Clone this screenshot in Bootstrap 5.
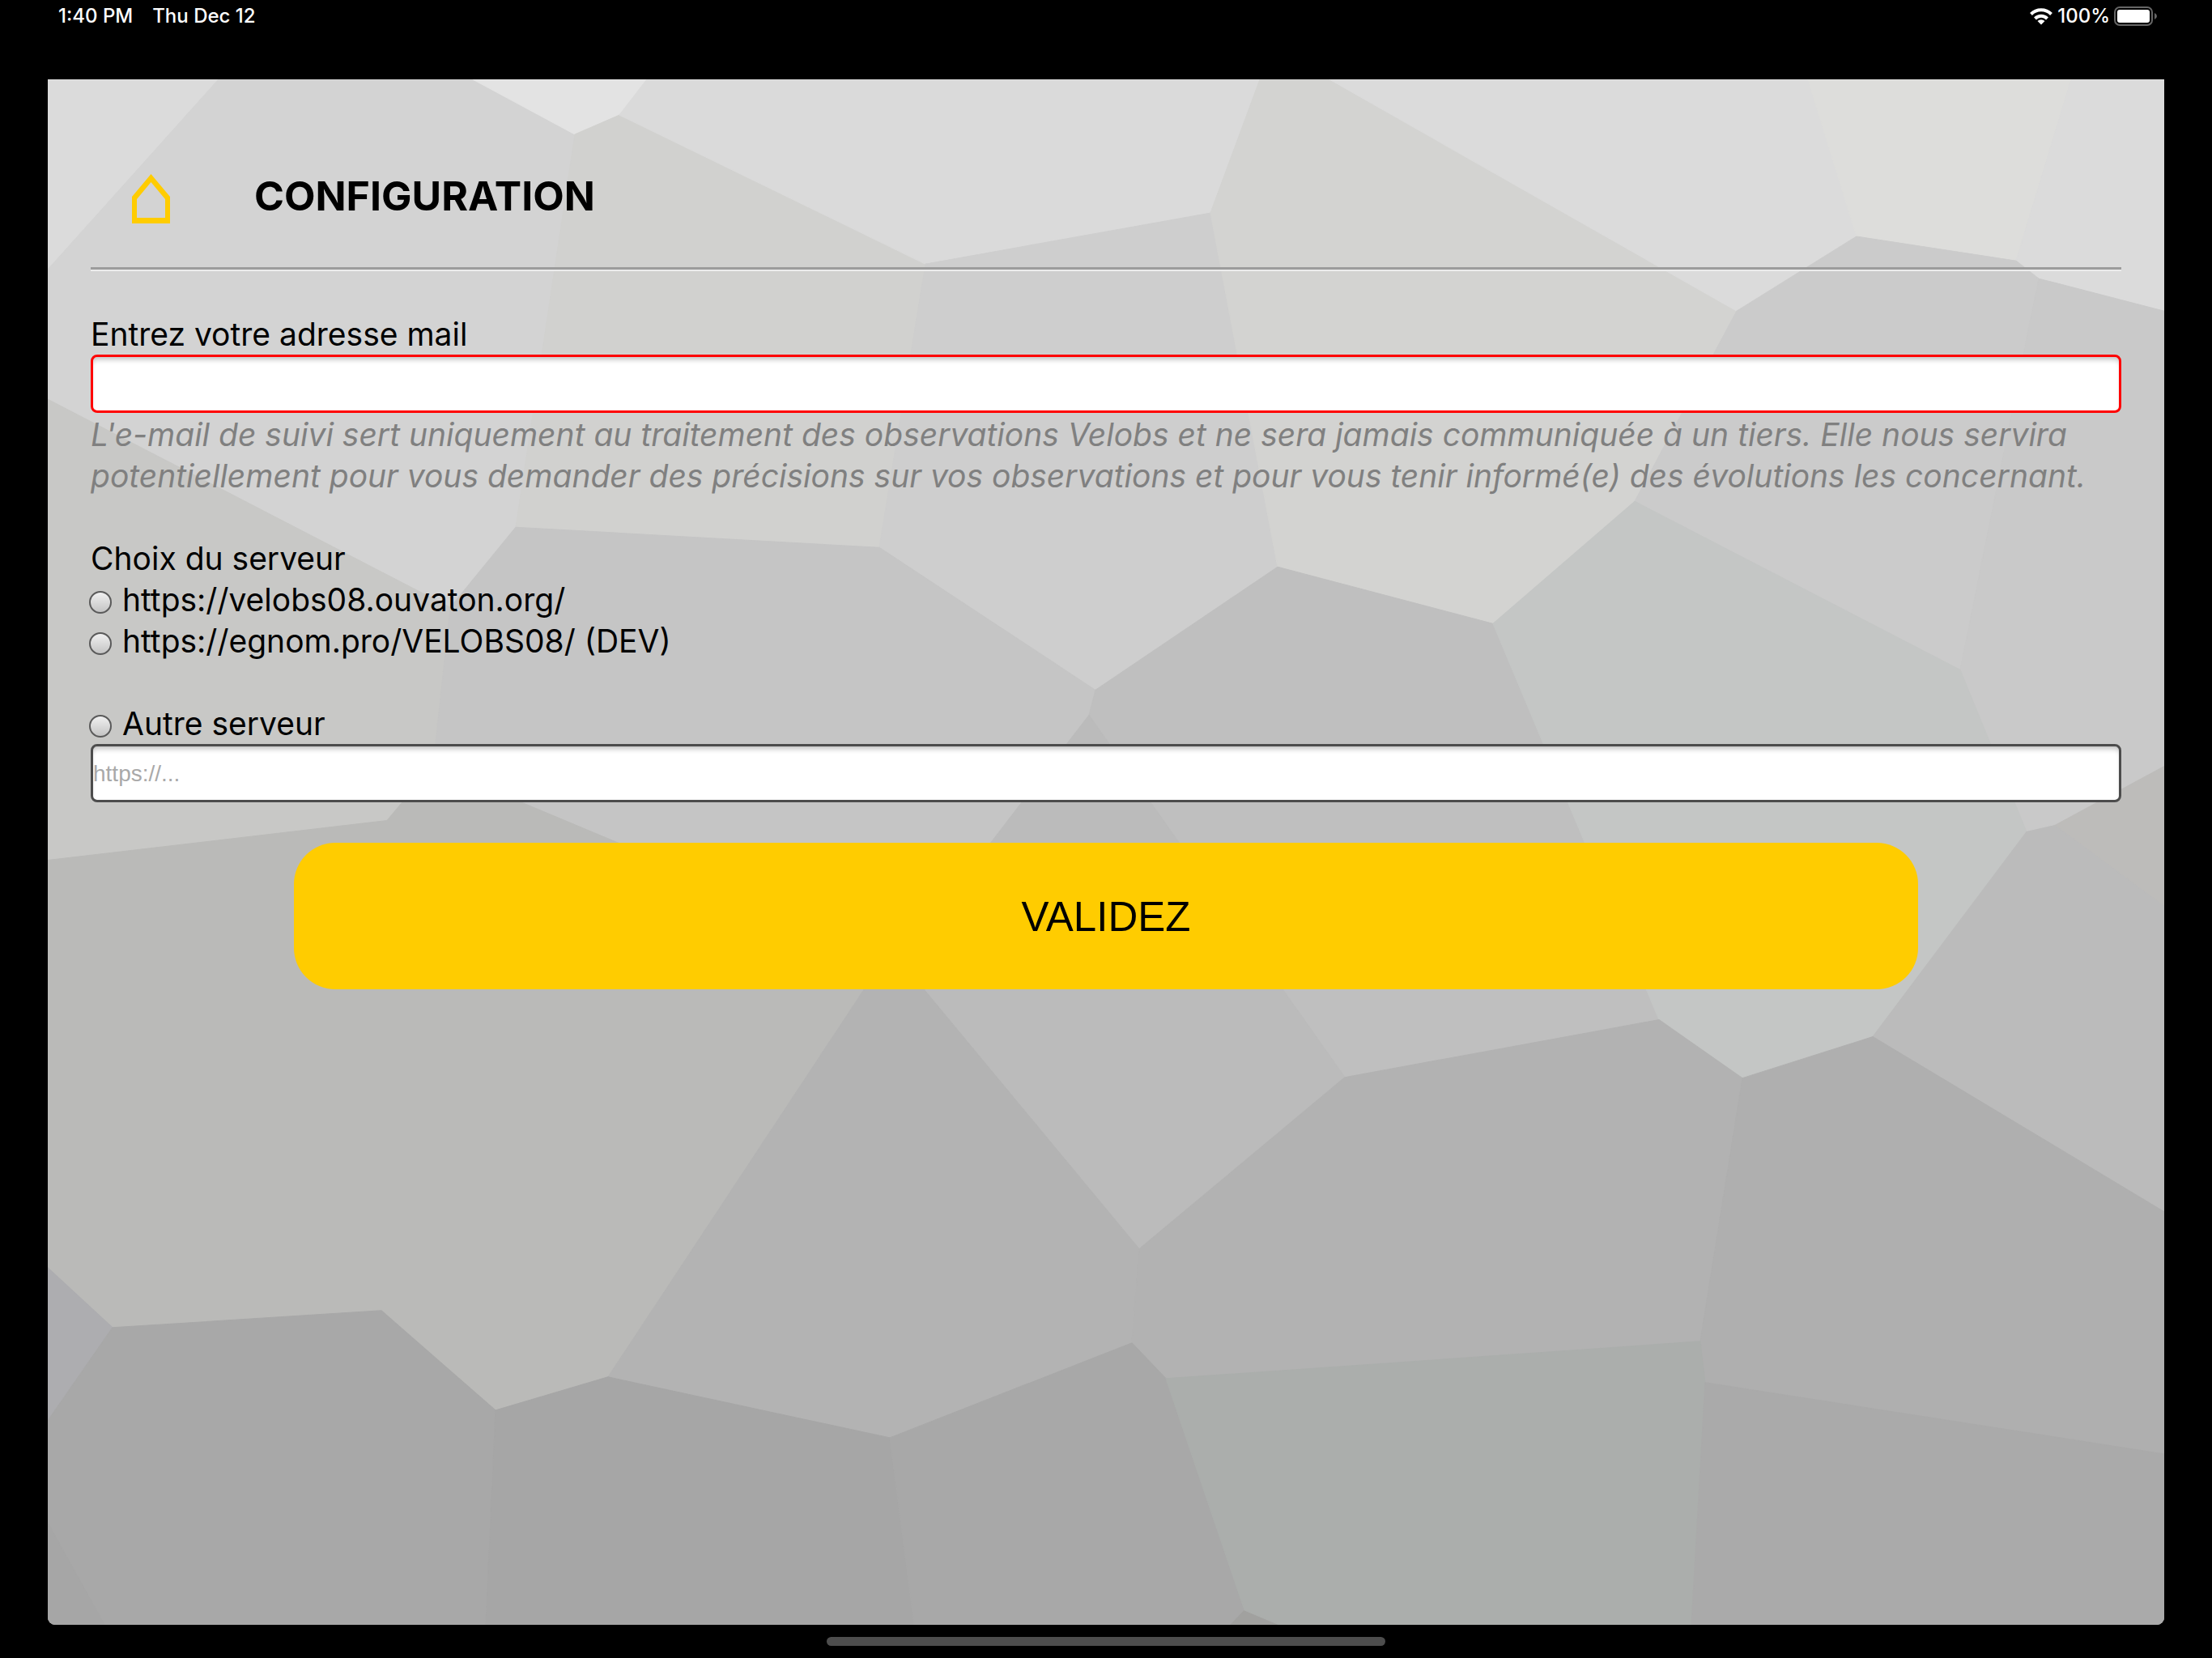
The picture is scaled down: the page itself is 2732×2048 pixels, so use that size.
<!DOCTYPE html>
<html lang="fr">
<head>
<meta charset="utf-8">
<meta name="viewport" content="width=device-width, initial-scale=1">
<title>Configuration</title>
<link href="https://cdn.jsdelivr.net/npm/bootstrap@5.3.0/dist/css/bootstrap.min.css" rel="stylesheet">
<style>
  body { background: #000; color: #000; font-family: Inter, "Liberation Sans", sans-serif; font-size: 39px; line-height: 51px; }
  .status-bar { height: 98px; padding: 4px 67px 0 72px; color: #fff; font-size: 24px; line-height: 32px; font-weight: 500; }
  .status-icons { gap: 5px; }
  .panel { margin: 0 59px; padding: 96px 53px 60px; border-radius: 0 0 9px 9px; }
  .facets { z-index: 0; }
  .panel-body { z-index: 1; }
  .title-row { height: 96px; padding-left: 51px; gap: 104px; }
  .home-link { padding-top: 7px; }
  .title-row h1 { font-size: 50px; line-height: 60px; }
  .rule { height: 5px; margin: 40px 0 52px; border: 0; border-top: 3px solid #9c9c9c; border-bottom: 2px solid #ececec; opacity: 1; }
  .field { height: 72px; padding: 2px 0 0; border: 3px solid #4c4c4c; border-radius: 8px; background: #fff; box-shadow: inset 0 6px 6px -3px rgba(0,0,0,.25); font-family: "Liberation Sans", sans-serif; font-size: 28px; }
  .field:focus { border-color: #4c4c4c; box-shadow: inset 0 6px 6px -3px rgba(0,0,0,.25); }
  .field::placeholder { color: #a9a9a9; }
  .field-required, .field-required:focus { border-color: #f00; }
  .hint { color: #808080; padding-top: 1px; margin-bottom: 51px; }
  .choice { gap: 13px; margin-left: -2px; }
  .choice input { appearance: none; width: 28px; height: 28px; margin: 6px 0 0; border: 2px solid #5a5a5a; border-radius: 50%; background: linear-gradient(#f0f0f0, #c4c4c4); }
  .choice input:checked { background: radial-gradient(#333 35%, #ddd 40%); }
  .other { margin-top: 51px; }
  .submit { width: 80%; height: 181px; margin-top: 50px; padding: 4px 0 0; border: 0; border-radius: 51px; background: #fc0; color: #000; font-family: "Liberation Sans", sans-serif; font-size: 51px; }
  .submit:hover { background: #f2c200; color: #000; }
  .home-bar { height: 41px; }
  .home-bar span { width: 690px; height: 11px; border-radius: 6px; background: #4d4d4d; }
</style>
<script src="https://cdn.jsdelivr.net/npm/bootstrap@5.3.0/dist/js/bootstrap.bundle.min.js"></script>
</head>
<body class="min-vh-100 d-flex flex-column">

<header class="status-bar d-flex justify-content-between align-items-start">
  <div class="d-flex gap-4"><span>1:40 PM</span><span>Thu Dec 12</span></div>
  <div class="status-icons d-flex align-items-center">
    <svg width="30" height="22" viewBox="0 0 30 22" aria-label="Wi-Fi" role="img" fill="none" stroke="#fff" stroke-width="4">
      <path d="M2.5 8.5a17.5 17.5 0 0 1 25 0"/>
      <path d="M7.5 14a10.5 10.5 0 0 1 15 0"/>
      <path d="M10.5 17a6.5 6.5 0 0 1 9 0L15 21.5z" fill="#fff" stroke="none"/>
    </svg>
    <span>100%</span>
    <svg width="54" height="24" viewBox="0 0 54 24" aria-label="Batterie" role="img">
      <rect x="1" y="1" width="46" height="22" rx="6" fill="none" stroke="#666" stroke-width="2"/>
      <rect x="4" y="4" width="40" height="16" rx="3" fill="#fff"/>
      <path d="M50 8q3 1.500 3 4t-3 4z" fill="#666"/>
    </svg>
  </div>
</header>

<main class="panel flex-grow-1 position-relative overflow-hidden">
  <svg class="facets position-absolute top-0 start-0 w-100 h-100" viewBox="59 98 2614 1908" preserveAspectRatio="none" aria-hidden="true">
    <rect x="59" y="98" width="2614" height="1908" fill="#c5c5c5"/>
    <g stroke-width="1">
      <path fill="#dbdbdb" stroke="#dbdbdb" d="M59 98H270L59 333z"/>
      <path fill="#d3d3d3" stroke="#d3d3d3" d="M270 98H584L710 166L637 651L556 750L59 493V333z"/>
      <path fill="#e3e3e3" stroke="#e3e3e3" d="M584 98H799L765 142L710 166z"/>
      <path fill="#d1d1cf" stroke="#d1d1cf" d="M710 166L765 142L1143 326L1086 676L637 651z"/>
      <path fill="#dadada" stroke="#dadada" d="M799 98H1556L1495 263L1143 326L765 142z"/>
      <path fill="#cecece" stroke="#cecece" d="M1143 326L1495 263L1578 700L1353 852L1086 676z"/>
      <path fill="#d3d3d1" stroke="#d3d3d1" d="M1556 98H1642L2145 384L2019 619L1844 770L1578 700L1495 263z"/>
      <path fill="#dbdbdb" stroke="#dbdbdb" d="M1642 98H2233L2293 292L2145 384z"/>
      <path fill="#dddddb" stroke="#dddddb" d="M2233 98H2558L2490 322L2293 292z"/>
      <path fill="#dbdbdb" stroke="#dbdbdb" d="M2558 98H2673V384L2518 344L2490 322z"/>
      <path fill="#cbcbcb" stroke="#cbcbcb" d="M2145 384L2293 292L2490 322L2518 344L2421 827L2019 619z"/>
      <path fill="#c9c9c9" stroke="#c9c9c9" d="M2518 344L2673 384V946L2538 1019L2503 1027L2421 827z"/>
      <path fill="#c8c8c6" stroke="#c8c8c6" d="M59 493L556 750L535 945L478 1013L59 1062z"/>
      <path fill="#c5c5c5" stroke="#c5c5c5" d="M637 651L1086 676L1353 852L1345 883L1224 1040L1100 1172L762 1040L535 945L556 750z"/>
      <path fill="#bfbfbf" stroke="#bfbfbf" d="M1578 700L1844 770L2049 1259L1661 1330L1345 883L1353 852z"/>
      <path fill="#c4c6c5" stroke="#c4c6c5" d="M2019 619L2421 827L2503 1027L2313 1280L2152 1331L2049 1259L1844 770z"/>
      <path fill="#bdbcba" stroke="#bdbcba" d="M2538 1019L2673 946V1119z"/>
      <path fill="#bbb" stroke="#bbb" d="M2503 1027L2538 1019L2673 1119V1496L2313 1280z"/>
      <path fill="#bbb" stroke="#bbb" d="M1345 883L1661 1330L1407 1542L1100 1172L1224 1040z"/>
      <path fill="#babab8" stroke="#babab8" d="M59 1062L478 1013L535 945L762 1040L1100 1172L751 1700L612 1741L471 1618L139 1639L59 1565z"/>
      <path fill="#b3b3b3" stroke="#b3b3b3" d="M1100 1172L1407 1542L1398 1658L1099 1775L751 1700z"/>
      <path fill="#b2b2b2" stroke="#b2b2b2" d="M1661 1330L2049 1259L2152 1331L2100 1656L1440 1702L1398 1658L1407 1542z"/>
      <path fill="#afafaf" stroke="#afafaf" d="M2152 1331L2313 1280L2673 1496V1795L2106 1707L2100 1656z"/>
      <path fill="#adadb0" stroke="#adadb0" d="M59 1565L139 1639L59 1754z"/>
      <path fill="#a8a8a8" stroke="#a8a8a8" d="M139 1639L471 1618L612 1741L600 2006H129L59 1880V1754z"/>
      <path fill="#a6a6a6" stroke="#a6a6a6" d="M59 1880L129 2006H59z"/>
      <path fill="#a6a6a6" stroke="#a6a6a6" d="M612 1741L751 1700L1099 1775L1129 2006H600z"/>
      <path fill="#a8a8a8" stroke="#a8a8a8" d="M1099 1775L1398 1658L1440 1702L1537 1988L1520 2006H1129z"/>
      <path fill="#a1a19f" stroke="#a1a19f" d="M1537 1988L1580 2006H1520z"/>
      <path fill="#abaeac" stroke="#abaeac" d="M1440 1702L2100 1656L2106 1707L2089 2006H1580L1537 1988z"/>
      <path fill="#aaa" stroke="#aaa" d="M2106 1707L2673 1795V2006H2089z"/>
    </g>
  </svg>

  <div class="panel-body position-relative">
    <div class="title-row d-flex align-items-center">
      <a href="#" aria-label="Accueil" class="home-link d-flex">
        <svg width="47" height="61" viewBox="0 0 47 61" aria-hidden="true"><path fill="#fc0" fill-rule="evenodd" d="M23.500 0L47 28V61H0V28zM23.500 10L6 31V54H41V31z"/></svg>
      </a>
      <h1 class="fw-bold m-0">CONFIGURATION</h1>
    </div>
    <hr class="rule">

    <form>
      <label for="mail" class="d-block">Entrez votre adresse mail</label>
      <input id="mail" type="email" class="form-control field field-required" aria-describedby="mail-hint">
      <p id="mail-hint" class="hint fst-italic">L'e-mail de suivi sert uniquement au traitement des observations Velobs et ne sera jamais communiquée à un tiers. Elle nous servira potentiellement pour vous demander des précisions sur vos observations et pour vous tenir informé(e) des évolutions les concernant.</p>

      <div role="radiogroup" aria-labelledby="server-title">
        <div id="server-title">Choix du serveur</div>
        <div class="choice d-flex align-items-center">
          <input type="radio" name="server" id="server-prod"><label for="server-prod">https://velobs08.ouvaton.org/</label>
        </div>
        <div class="choice d-flex align-items-center">
          <input type="radio" name="server" id="server-dev"><label for="server-dev">https://egnom.pro/VELOBS08/ (DEV)</label>
        </div>
        <div class="choice other d-flex align-items-center">
          <input type="radio" name="server" id="server-other"><label for="server-other">Autre serveur</label>
        </div>
      </div>
      <input type="text" class="form-control field" placeholder="https://..." aria-label="Adresse du serveur">

      <button type="button" class="btn submit d-block mx-auto">VALIDEZ</button>
    </form>
  </div>
</main>

<footer class="home-bar d-flex justify-content-center align-items-center"><span></span></footer>
</body>
</html>
